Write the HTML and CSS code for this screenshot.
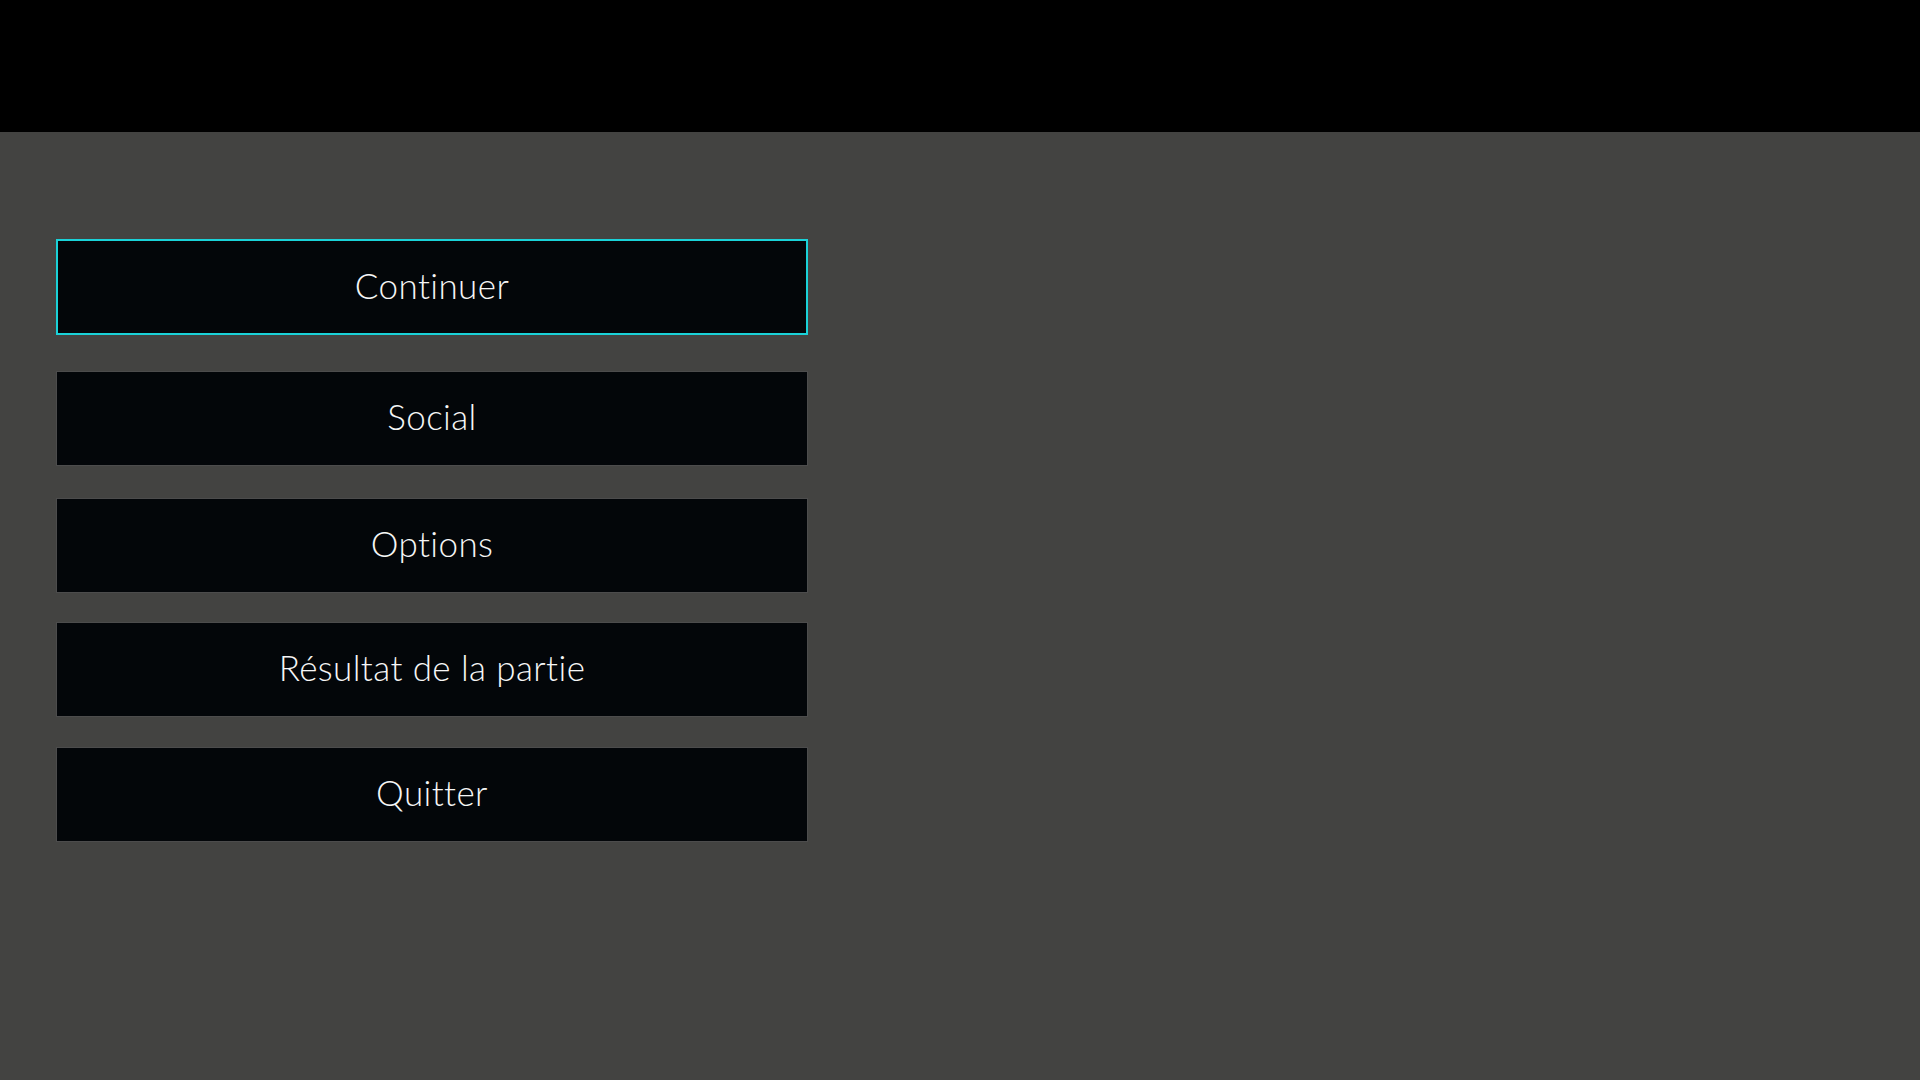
FILE: index.html
```html
<!DOCTYPE html>
<html lang="fr">
<head>
<meta charset="utf-8">
<title>Menu</title>
<link rel="stylesheet" href="styles.css">
</head>
<body>
<div class="topbar"></div>
<main class="stage">
  <nav class="menu">
    <button class="item item-1 selected">Continuer</button>
    <button class="item item-2">Social</button>
    <button class="item item-3">Options</button>
    <button class="item item-4">Résultat de la partie</button>
    <button class="item item-5">Quitter</button>
  </nav>
</main>
</body>
</html>
```
FILE: styles.css
```css
html, body {
  margin: 0;
  padding: 0;
  height: 100%;
}
body {
  background: #434341;
  font-family: "Lato", "Open Sans", sans-serif;
  overflow: hidden;
}
.topbar {
  height: 132px;
  background: #000000;
}
.stage {
  padding: 107px 0 0 56px;
}
.menu {
  display: flex;
  flex-direction: column;
  width: 752px;
}
.item {
  box-sizing: border-box;
  height: 95px;
  background: #030609;
  border: 1px solid #4c4c4c;
  color: #f6f6f6;
  font-family: inherit;
  font-size: 35px;
  font-weight: 300;
  letter-spacing: 0.4px;
  padding: 0 0 5px 0;
  text-align: center;
  display: flex;
  align-items: center;
  justify-content: center;
}
.item.selected {
  border: 2px solid #1ad2d8;
  height: 96px;
}
.item-2 { margin-top: 36px; }
.item-3 { margin-top: 32px; }
.item-4 { margin-top: 29px; }
.item-5 { margin-top: 30px; }
```
